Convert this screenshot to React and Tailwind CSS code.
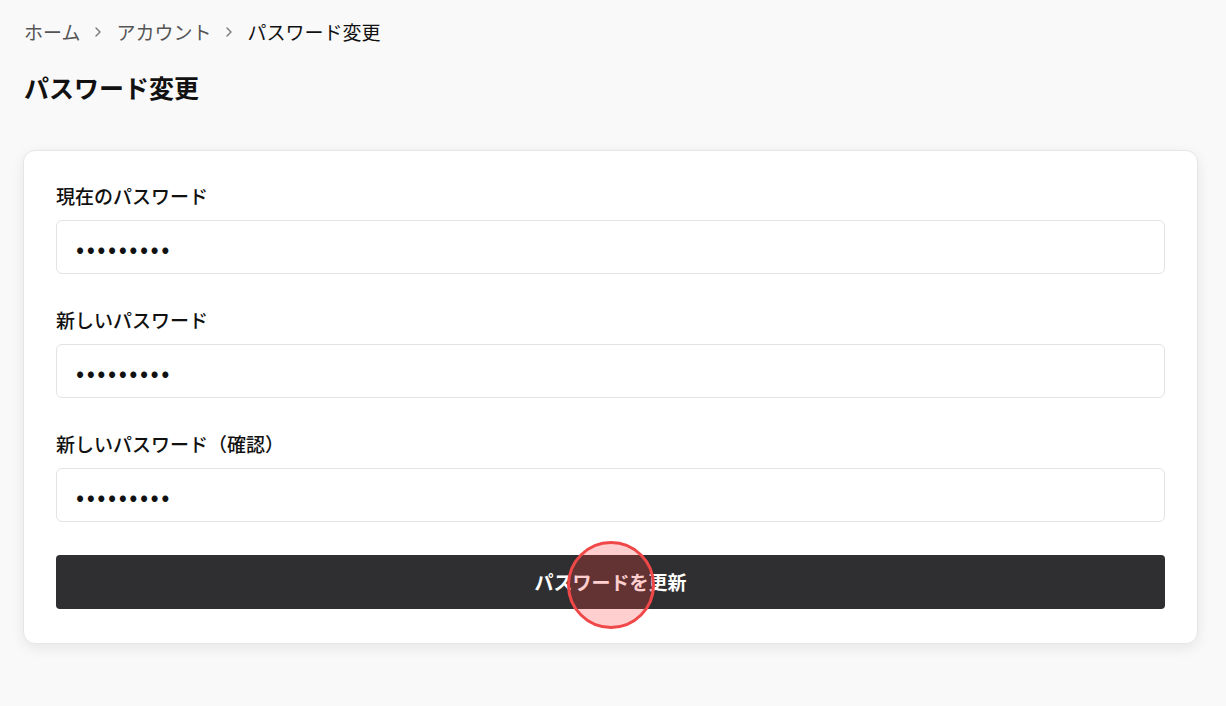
import React from 'react'
import { ChevronRight } from 'lucide-react'

const fields = [
  { label: '現在のパスワード' },
  { label: '新しいパスワード' },
  { label: '新しいパスワード（確認）' },
]

const App = () => {
  return (
    <div className="min-h-[706px] w-full bg-[#f9f9f9] pl-[23px] pr-[28px] pt-[18px] text-[#111]" style={{ fontFamily: '"Noto Sans CJK JP", "Noto Sans", sans-serif' }}>
      {/* breadcrumb */}
      <nav className="flex items-center gap-[10px] text-[19px] leading-[27px] pl-[1px]">
        <span className="text-[#555]">ホーム</span>
        <ChevronRight size={16} strokeWidth={2} className="text-[#777]" />
        <span className="text-[#555]">アカウント</span>
        <ChevronRight size={16} strokeWidth={2} className="text-[#777]" />
        <span className="text-[#111]">パスワード変更</span>
      </nav>

      <h1 className="mt-[25px] pl-[1px] text-[25px] font-bold leading-[34px]">パスワード変更</h1>

      {/* form card */}
      <div className="mt-[46px] rounded-[12px] border border-[#e6e6e6] bg-white px-[32px] pt-[31px] pb-[34px] shadow-[0_4px_14px_rgba(0,0,0,0.08)]">
        <form className="flex flex-col" onSubmit={(e) => e.preventDefault()}>
          {fields.map((f, i) => (
            <div key={i} className="mb-[32px] flex flex-col">
              <label className="mb-[11px] text-[19px] leading-[27px] font-medium">{f.label}</label>
              <input
                type="password"
                readOnly
                defaultValue="123456789"
                className="h-[54px] rounded-[6px] border border-[#e3e3e3] bg-white px-[19px] text-[24px] tracking-[2.5px] outline-none"
              />
            </div>
          ))}
          <div className="relative mt-[1px]">
            <button type="submit" className="h-[54px] w-full rounded-[4px] bg-[#2f2f31] text-[19px] font-bold text-white">
              パスワードを更新
            </button>
            <span className="pointer-events-none absolute left-[511px] top-[-14px] h-[88px] w-[88px] rounded-full border-[3px] border-[#f04848] bg-[rgba(255,60,60,0.25)]" />
          </div>
        </form>
      </div>
    </div>
  )
}

export default App
